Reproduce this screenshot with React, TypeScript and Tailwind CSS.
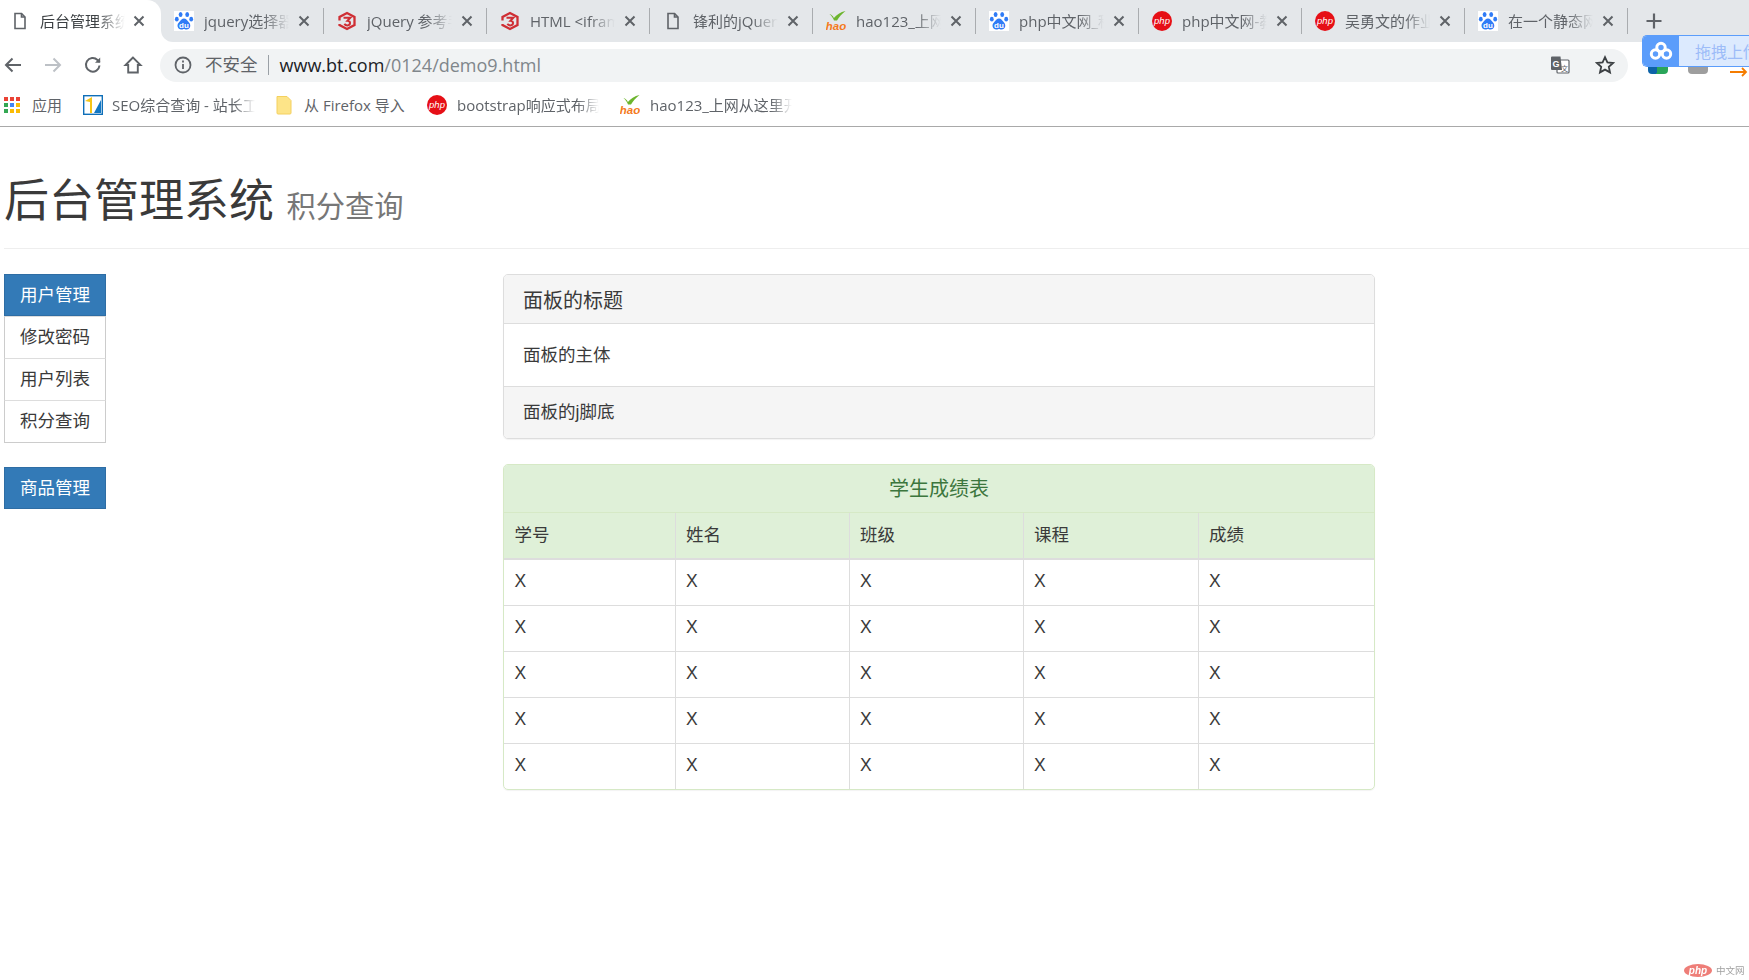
const UI_FONT = "[font-family:'Open_Sans','Noto_Sans_CJK_SC',sans-serif]";

function FileIcon() {
  return (
    <svg viewBox="0 0 20 20" className="w-5 h-5 shrink-0" fill="none" stroke="#5f6368" strokeWidth="1.6">
      <path d="M5 2.5h6.5l3.5 3.5v11.5H5z" />
      <path d="M11.5 2.5V6H15" />
    </svg>
  );
}

function BaiduIcon() {
  return (
    <svg viewBox="0 0 20 20" className="w-5 h-5 shrink-0 bg-white">
      <g fill="#2f7bf6">
        <ellipse cx="6.6" cy="3.6" rx="1.9" ry="2.5" />
        <ellipse cx="13.2" cy="3.6" rx="1.9" ry="2.5" />
        <ellipse cx="2.8" cy="8.2" rx="1.9" ry="2.4" />
        <ellipse cx="17.2" cy="8.2" rx="1.9" ry="2.4" />
        <path d="M10 7.5c2 0 3 1.6 4.2 3 1.5 1.5 2.4 3 2 5-.4 2-2.2 3.2-4 3-1.2-.1-1.5-.5-2.2-.5s-1.2.4-2.4.5c-1.8.2-3.6-1-4-3-.4-2 .6-3.5 2.1-5 1.2-1.4 2.3-3 4.3-3z" />
      </g>
      <text x="10" y="16.6" textAnchor="middle" fontSize="8" fontWeight="700" fill="#fff" fontFamily="Liberation Sans">du</text>
    </svg>
  );
}

function W3Icon() {
  return (
    <svg viewBox="0 0 20 20" className="w-5 h-5 shrink-0" fill="none" stroke="#cf2e34" strokeWidth="2.3">
      <path d="M2.5 9.5V6L10 2l7.5 4v8L10 18l-7.5-4v-1" />
      <path d="M6.5 6.8h6.8l-2.8 3c3.4 0 3.4 4.6-.2 4.6-1.4 0-2.3-.6-3-1.5" strokeWidth="2" />
    </svg>
  );
}

function HaoIcon() {
  return (
    <svg viewBox="0 0 20 20" className="w-5 h-5 shrink-0">
      <path d="M3.5 3c2 .6 3.400 1.800 4.400 4C10.500 3.600 14.500 1.200 19.500 0c-3.600 3-6.500 6-8.500 9.500H8C7.200 7.200 5.800 5 3.500 3z" fill="#6cb52d" />
      <text x="10" y="19" textAnchor="middle" fontSize="11.500" fontStyle="italic" fontWeight="700" fill="#f47a1c" fontFamily="Liberation Sans">hao</text>
    </svg>
  );
}

function PhpIcon() {
  return (
    <svg viewBox="0 0 20 20" className="w-5 h-5 shrink-0">
      <circle cx="10" cy="10" r="10" fill="#e60f16" />
      <text x="10" y="13" textAnchor="middle" fontSize="9.500" fontStyle="italic" fill="#fff" fontFamily="Liberation Sans">php</text>
    </svg>
  );
}

function CloseIcon() {
  return (
    <svg viewBox="0 0 16 16" className="w-4 h-4 shrink-0" stroke="#5f6368" strokeWidth="2" fill="none">
      <path d="M3.500 3.500l9 9M12.500 3.500l-9 9" />
    </svg>
  );
}

const tabs = [
  { title: "jquery选择器", icon: <BaiduIcon /> },
  { title: "jQuery 参考手册", icon: <W3Icon /> },
  { title: "HTML <iframe> 标签", icon: <W3Icon /> },
  { title: "锋利的jQuery", icon: <FileIcon /> },
  { title: "hao123_上网从这里开始", icon: <HaoIcon /> },
  { title: "php中文网_程序员", icon: <BaiduIcon /> },
  { title: "php中文网-教程", icon: <PhpIcon /> },
  { title: "吴勇文的作业", icon: <PhpIcon /> },
  { title: "在一个静态网页", icon: <BaiduIcon /> },
];

function TabStrip() {
  return (
    <div className="flex h-[42px] bg-white">
      <div className="w-[161px] bg-[#e4e7ea] shrink-0">
        <div className="h-full bg-white rounded-tr-[14px] flex items-center pl-[10px]">
          <FileIcon />
          <span className="ml-[10px] w-[85px] text-[15px] text-[#3c4043] whitespace-nowrap overflow-hidden [mask-image:linear-gradient(to_right,black_65%,transparent)]">后台管理系统</span>
          <span className="ml-[6px]"><CloseIcon /></span>
        </div>
      </div>
      <div className="flex-1 flex items-center bg-[#e4e7ea] rounded-bl-[12px]">
        {tabs.map((t) => (
          <div key={t.title} className="w-[163px] h-full flex items-center pl-[13px] shrink-0">
            {t.icon}
            <span className="ml-[10px] w-[85px] text-[15px] text-[#5f6368] whitespace-nowrap overflow-hidden [mask-image:linear-gradient(to_right,black_70%,transparent)]">{t.title}</span>
            <span className="ml-[7px]"><CloseIcon /></span>
            <div className="ml-auto w-[1px] h-[26px] bg-[#a9acaf]" />
          </div>
        ))}
        <svg viewBox="0 0 20 20" className="w-5 h-5 ml-[16px]" stroke="#5f6368" strokeWidth="2.200" fill="none">
          <path d="M10 2.500v15M2.500 10h15" />
        </svg>
      </div>
    </div>
  );
}

function AddressBar() {
  return (
    <div className="relative flex items-center h-[46px] pl-[2.5px] bg-white">
      <div className="flex items-center gap-[20px]">
        <svg viewBox="0 0 20 20" className="w-5 h-5" stroke="#5f6368" strokeWidth="2" fill="none">
          <path d="M18 10H3M9.500 3.500L3 10l6.500 6.500" />
        </svg>
        <svg viewBox="0 0 20 20" className="w-5 h-5" stroke="#bdc1c6" strokeWidth="2" fill="none">
          <path d="M2 10h15M10.500 3.500L17 10l-6.500 6.500" />
        </svg>
        <svg viewBox="0 0 20 20" className="w-5 h-5" stroke="#5f6368" strokeWidth="2" fill="none">
          <path d="M16.500 10.500a6.800 6.800 0 1 1-2-5.500l2.200 2" />
          <path d="M17.200 2.500v5.200H12" fill="#5f6368" stroke="none" />
        </svg>
        <svg viewBox="0 0 20 20" className="w-5 h-5" stroke="#5f6368" strokeWidth="1.900" fill="none">
          <path d="M10 2.500L2.500 10h2.700v7.500h9.600V10h2.700z" />
        </svg>
      </div>
      <div className="ml-[17.5px] w-[1468px] h-[33px] rounded-full bg-[#f1f3f4] flex items-center pl-[13px]">
        <svg viewBox="0 0 20 20" className="w-5 h-5" fill="none" stroke="#5f6368" strokeWidth="1.800">
          <circle cx="10" cy="10" r="7.500" />
          <path d="M10 9v5M10 5.500v2" />
        </svg>
        <span className="ml-[12px] text-[17.5px] text-[#5f6368] leading-none">不安全</span>
        <div className="ml-[10px] w-[1px] h-[20px] bg-[#9aa0a6]" />
        <span className="ml-[11px] text-[18px] leading-none whitespace-nowrap text-[#80868b]">
          <span className="text-[#202124]">www.bt.com</span>/0124/demo9.html
        </span>
        <svg viewBox="0 0 22 22" className="w-[22px] h-[22px] ml-auto">
          <rect x="8" y="6" width="12" height="13" rx="1" fill="#fff" stroke="#5f6368" strokeWidth="1.200" />
          <path d="M2 3.500a1 1 0 0 1 1-1h8.500L13 16H3a1 1 0 0 1-1-1z" fill="#5f6368" />
          <text x="7" y="12.500" textAnchor="middle" fontSize="9" fontWeight="700" fill="#fff" fontFamily="Liberation Sans">G</text>
          <text x="15.500" y="16.500" textAnchor="middle" fontSize="7" fill="#5f6368" fontFamily="Noto Sans CJK SC">文</text>
        </svg>
        <svg viewBox="0 0 20 20" className="w-5 h-5 ml-[24px] mr-[13px]" fill="none" stroke="#3c4043" strokeWidth="1.800">
          <path d="M10 2.200l2.400 5.200 5.600.6-4.200 3.800 1.200 5.600L10 14.600l-5 2.800 1.200-5.600L2 8l5.600-.6z" />
        </svg>
      </div>
      <div className="ml-[20px] w-[20px] h-[20px] -mt-[2px] rounded-sm bg-[linear-gradient(100deg,#0d63a8_50%,#2aa55a_50%)]" />
      <div className="ml-[20px] w-[20px] h-[20px] -mt-[2px] rounded-sm bg-[#9e9e9e]" />
      <svg viewBox="0 0 18 10" className="w-[18px] h-[10px] ml-[22px] mt-[14px]" fill="none" stroke="#f57c00" strokeWidth="1.800">
        <path d="M0 5h16M12 1l4 4-4 4" />
      </svg>
    </div>
  );
}

function Bookmarks() {
  const fade = "whitespace-nowrap overflow-hidden [mask-image:linear-gradient(to_right,black_85%,transparent)]";
  return (
    <div className="flex items-center h-[39px] pb-[4px] border-b border-[#a9a9a9] bg-white text-[15px] text-[#5f6368] pl-[4px]">
      <div className="grid grid-cols-3 gap-[2px] w-[16px] h-[16px] shrink-0">
        {["#ea4335", "#ea4335", "#ea4335", "#34a853", "#4285f4", "#fbbc05", "#34a853", "#fbbc05", "#fbbc05"].map((c, i) => (
          <i key={i} className="block" style={{ background: c }} />
        ))}
      </div>
      <span className="ml-[12px] w-[30px] shrink-0">应用</span>
      <svg viewBox="0 0 20 20" className="w-5 h-5 ml-[21px] shrink-0">
        <rect x="0.700" y="0.700" width="18.600" height="18.600" fill="#fff" stroke="#0f6fb8" strokeWidth="1.400" />
        <path d="M2 6l7-4v16H7V7z" fill="#f5c518" />
        <path d="M18 5v13h-7z" fill="#1177c4" />
      </svg>
      <span className={`ml-[9px] w-[143px] shrink-0 ${fade}`}>SEO综合查询 - 站长工具</span>
      <svg viewBox="0 0 16 20" className="w-4 h-5 ml-[21px] shrink-0">
        <path d="M1 1.500h10l4 4V18a1 1 0 0 1-1 1H2a1 1 0 0 1-1-1z" fill="#fde488" stroke="#f4d05e" />
      </svg>
      <span className="ml-[12px] w-[103px] shrink-0 whitespace-nowrap">从 Firefox 导入</span>
      <span className="ml-[20px]"><PhpIcon /></span>
      <span className={`ml-[10px] w-[142px] shrink-0 ${fade}`}>bootstrap响应式布局</span>
      <span className="ml-[21px]"><HaoIcon /></span>
      <span className={`ml-[10px] w-[142px] shrink-0 ${fade}`}>hao123_上网从这里开始</span>
    </div>
  );
}

function NavButton({ label }: { label: string }) {
  return (
    <div className="h-[42px] bg-[#337ab7] border border-[#2e6da4] text-white flex items-center justify-center">{label}</div>
  );
}

function NavItem({ label, last }: { label: string; last?: boolean }) {
  return (
    <div className={`h-[42px] flex items-center justify-center border-x border-[#ccc] border-t border-t-[#ddd] ${last ? "border-b border-b-[#ccc] h-[43px]" : ""}`}>{label}</div>
  );
}

const headers = ["学号", "姓名", "班级", "课程", "成绩"];

function ScoreTable() {
  return (
    <div className="mt-[25px] rounded-[5px] border border-[#d6e9c6] shadow-[0_1px_1px_rgba(0,0,0,0.05)] overflow-hidden">
      <div className="h-[48px] bg-[#dff0d8] text-[#3c763d] text-[20px] flex items-center justify-center border-b border-[#d6e9c6]">学生成绩表</div>
      <table className="w-full table-fixed border-collapse">
        <colgroup>
          <col className="w-[171px]" />
          <col className="w-[174px]" />
          <col className="w-[174px]" />
          <col className="w-[175px]" />
          <col />
        </colgroup>
        <thead>
          <tr className="h-[46px] bg-[#dff0d8] border-b-2 border-[#ddd]">
            {headers.map((h, i) => (
              <th key={h} className={`font-normal text-left pl-[10.5px] ${i > 0 ? "border-l border-[#ddd]" : ""}`}>{h}</th>
            ))}
          </tr>
        </thead>
        <tbody>
          {[0, 1, 2, 3, 4].map((r) => (
            <tr key={r} className={`h-[46px] ${r < 4 ? "border-b border-[#ddd]" : ""}`}>
              {headers.map((h, i) => (
                <td key={h} className={`pl-[10.5px] pb-[2px] ${i > 0 ? "border-l border-[#ddd]" : ""}`}>X</td>
              ))}
            </tr>
          ))}
        </tbody>
      </table>
    </div>
  );
}

export default function App() {
  return (
    <div className="relative h-[980px] overflow-hidden bg-white">
      <div className={UI_FONT}>
        <TabStrip />
        <AddressBar />
        <Bookmarks />
      </div>

      <div className="[font-family:'Liberation_Sans','Noto_Sans_CJK_SC',sans-serif] text-[17.5px] text-[#3a3a3a]">
        <div className="ml-[4px] pt-[50px] pb-[16px] border-b border-[#eee]">
          <h1 className="text-[45px] leading-[50px] font-normal">
            后台管理系统 <small className="text-[29.25px] text-[#777]">积分查询</small>
          </h1>
        </div>

        <div className="flex pl-[4px] pt-[25px]">
          <div className="w-[102px] shrink-0">
            <NavButton label="用户管理" />
            <NavItem label="修改密码" />
            <NavItem label="用户列表" />
            <NavItem label="积分查询" last />
            <div className="mt-[24px]">
              <NavButton label="商品管理" />
            </div>
          </div>

          <div className="ml-[397px] w-[872px]">
            <div className="rounded-[5px] border border-[#ddd] shadow-[0_1px_1px_rgba(0,0,0,0.05)] overflow-hidden">
              <div className="h-[49px] bg-[#f5f5f5] border-b border-[#ddd] flex items-center px-[19px] pt-[3px] text-[20px]">面板的标题</div>
              <div className="h-[62px] flex items-center px-[19px]">面板的主体</div>
              <div className="h-[52px] bg-[#f5f5f5] border-t border-[#ddd] flex items-center px-[19px]">面板的j脚底</div>
            </div>
            <ScoreTable />
          </div>
        </div>
      </div>

      {/* upload widget sitting over the toolbar */}
      <div className="absolute left-[1642px] top-[35px] w-[107px] h-[32px] flex rounded-l-[5px] overflow-hidden border border-r-0 border-[#5b9dfb]">
        <div className="w-[36px] bg-[#5b9dfb] flex items-center justify-center shrink-0">
          <svg viewBox="0 0 24 20" className="w-[24px] h-[20px]" fill="none" stroke="#fff" strokeWidth="3">
            <circle cx="12" cy="6.500" r="4.200" />
            <circle cx="6.500" cy="13" r="4.200" />
            <circle cx="17.500" cy="13" r="4.200" />
          </svg>
        </div>
        <div className="flex-1 bg-[#dceafe] pl-[16px] text-[16px] leading-[30px] text-[#9dbcf8] whitespace-nowrap overflow-hidden [font-family:'Noto_Sans_CJK_SC',sans-serif]">拖拽上传</div>
      </div>

      {/* site watermark */}
      <div className="absolute left-[1684px] top-[963px] flex items-center gap-[4px] opacity-70">
        <span className="w-[28px] h-[13px] rounded-[50%] bg-[#e8483f] text-white text-[10px] leading-[13px] text-center italic font-bold [font-family:'Liberation_Sans',sans-serif]">php</span>
        <span className="text-[9.5px] text-[#777] [font-family:'Noto_Sans_CJK_SC',sans-serif]">中文网</span>
      </div>
    </div>
  );
}
